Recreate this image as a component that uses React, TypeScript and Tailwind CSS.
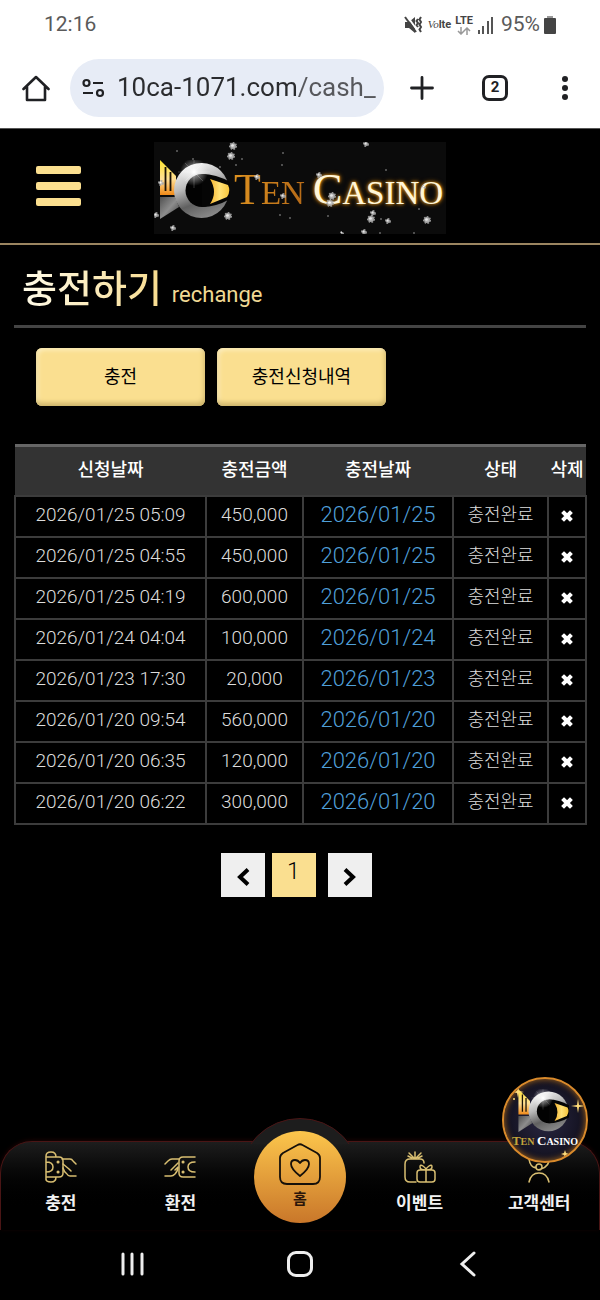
import { useState } from "react";
import type { ReactNode } from "react";

const columns = ["신청날짜", "충전금액", "충전날짜", "상태", "삭제"];

const initialRows = [
  { id: 1, requested: "2026/01/25 05:09", amount: "450,000", charged: "2026/01/25" },
  { id: 2, requested: "2026/01/25 04:55", amount: "450,000", charged: "2026/01/25" },
  { id: 3, requested: "2026/01/25 04:19", amount: "600,000", charged: "2026/01/25" },
  { id: 4, requested: "2026/01/24 04:04", amount: "100,000", charged: "2026/01/24" },
  { id: 5, requested: "2026/01/23 17:30", amount: "20,000", charged: "2026/01/23" },
  { id: 6, requested: "2026/01/20 09:54", amount: "560,000", charged: "2026/01/20" },
  { id: 7, requested: "2026/01/20 06:35", amount: "120,000", charged: "2026/01/20" },
  { id: 8, requested: "2026/01/20 06:22", amount: "300,000", charged: "2026/01/20" },
];

// x, y, radius
const sparkles = [
  [79, 4, 4], [77, 14, 4], [19, 86, 3], [2, 73, 3], [7, 41, 3],
  [74, 74, 4], [103, 35, 3], [129, 54, 3], [212, 2, 3], [165, 33, 3], [178, 54, 4],
  [176, 61, 4], [217, 77, 4], [219, 71, 3], [234, 79, 3], [273, 78, 4], [270, 45, 2],
  [188, 91, 2], [210, 90, 3], [23, 9, 1], [39, 17, 1], [88, 17, 1], [129, 11, 1],
  [128, 23, 1], [82, 23, 1], [66, 25, 1], [126, 73, 1], [136, 76, 1], [232, 28, 1],
  [227, 77, 1], [265, 67, 1], [174, 74, 1], [226, 91, 1], [260, 91, 1],
];

function StatusBar() {
  return (
    <div className="flex h-[47px] items-center justify-between px-11 pt-0.5 text-[21px] text-[#5a5a5a]">
      <span>12:16</span>
      <div className="flex items-center gap-1">
        <svg width="20" height="20" viewBox="0 0 20 20" fill="none">
          <path d="M1 7h4l6-5v16l-6-5H1z" fill="#444" />
          <path d="M3 1l10 14" stroke="#fff" strokeWidth="2" />
          <path d="M1 2l11 15" stroke="#444" strokeWidth="2" />
          <path d="M14 4l-1.500 2 1.500 2-1.500 2 1.500 2M17 2l-1.500 2.500L17 7l-1.500 2.500L17 12l-1.500 2.500L17 17" stroke="#444" strokeWidth="2" />
        </svg>
        <span className="flex items-baseline text-[11px] leading-4 text-[#444]">
          <i className="font-['Liberation_Serif',serif]">Vo</i>
          <b>lte</b>
        </span>
        <span className="flex flex-col items-center text-[11px] font-bold leading-3 text-[#444]">
          LTE
          <svg width="14" height="8" viewBox="0 0 14 8" fill="none" stroke="#999" strokeWidth="1.500">
            <path d="M4 0v6M1 4l3 3 3-3M10 8V2M7 4l3-3 3 3" />
          </svg>
        </span>
        <svg width="20" height="18" viewBox="0 0 20 18" fill="#555">
          <path d="M1 14h2v4H1zM5 10h2v8H5zM10 5h2v13h-2zM14 1h2v17h-2z" />
        </svg>
        <span>95%</span>
        <svg width="12" height="18" viewBox="0 0 12 18">
          <path d="M3 0h6v2H3z" fill="#999" />
          <rect y="2" width="12" height="16" rx="1" fill="#444" />
        </svg>
      </div>
    </div>
  );
}

function BrowserBar() {
  const [url, setUrl] = useState("10ca-1071.com/cash_");

  return (
    <div className="flex h-[82px] items-center border-b border-[#555] px-5 text-[#202124]">
      <button aria-label="Home page" className="flex h-8 w-8 items-center justify-center">
        <svg width="28" height="28" viewBox="0 0 28 28" fill="none" stroke="currentColor" strokeWidth="2.600" strokeLinejoin="round">
          <path d="M1.500 15L14 3l12.500 12M5 12.500V26h18V12.500" strokeLinecap="round" />
        </svg>
      </button>
      <label className="ml-[18px] flex h-[58px] min-w-0 flex-1 items-center gap-3 rounded-full bg-[#e7ecf6] pl-3">
        <svg width="23" height="20" viewBox="0 0 23 20" fill="none" stroke="currentColor" strokeWidth="2.200" className="shrink-0" aria-hidden="true">
          <circle cx="4.500" cy="5" r="3" />
          <path d="M11 5h10M1 15h10" />
          <circle cx="18" cy="15" r="3" />
        </svg>
        <input
          aria-label="Address"
          value={url}
          onChange={(e) => setUrl(e.target.value)}
          className="min-w-0 flex-1 bg-linear-to-r from-[#2b2c2f] from-67% to-[#57585c] to-67% bg-clip-text text-[26px] text-transparent outline-none"
        />
      </label>
      <button aria-label="New tab" className="ml-6 flex h-7 w-7 items-center justify-center">
        <svg width="24" height="24" viewBox="0 0 24 24" stroke="currentColor" strokeWidth="2.800" strokeLinecap="round">
          <path d="M1.500 12h21M12 1.500v21" />
        </svg>
      </button>
      <button
        aria-label="Tabs"
        className="ml-[46px] flex h-[26px] w-[26px] items-center justify-center rounded-[7px] border-[3px] border-[#202124] text-[15px] font-bold leading-none"
      >
        2
      </button>
      <button aria-label="Menu" className="ml-[42px] flex h-8 w-[30px] items-center justify-center">
        <svg width="8" height="26" viewBox="0 0 8 26" fill="currentColor">
          <circle cx="4" cy="4" r="3" />
          <circle cx="4" cy="13" r="3" />
          <circle cx="4" cy="22" r="3" />
        </svg>
      </button>
    </div>
  );
}

function Emblem({ id, className }: { id: string; className: string }) {
  return (
    <svg viewBox="0 0 72 60" className={className} aria-hidden="true">
      <defs>
        <linearGradient id={id + "-ring"} x1="0.200" y1="0" x2="0.600" y2="1">
          <stop offset="0" stopColor="#fff" />
          <stop offset="0.400" stopColor="#b9b9b9" />
          <stop offset="0.700" stopColor="#606060" />
          <stop offset="1" stopColor="#8a8a8a" />
        </linearGradient>
        <linearGradient id={id + "-gold"} x1="0" y1="0" x2="0" y2="1">
          <stop offset="0" stopColor="#ffe52e" />
          <stop offset="0.550" stopColor="#ffdf96" />
          <stop offset="1" stopColor="#f08a18" />
        </linearGradient>
        <linearGradient id={id + "-tail"} x1="0" y1="0" x2="1" y2="1">
          <stop offset="0" stopColor="#505050" />
          <stop offset="0.500" stopColor="#8d8d8d" />
          <stop offset="1" stopColor="#383838" />
        </linearGradient>
        <linearGradient id={id + "-eye"} x1="0" y1="0" x2="1" y2="0">
          <stop offset="0" stopColor="#f5b431" />
          <stop offset="0.500" stopColor="#ffe176" />
          <stop offset="1" stopColor="#f6c53c" />
        </linearGradient>
        <radialGradient id={id + "-flare"}>
          <stop offset="0" stopColor="#fff" />
          <stop offset="0.300" stopColor="#fff" stopOpacity="0.500" />
          <stop offset="1" stopColor="#fff" stopOpacity="0" />
        </radialGradient>
      </defs>
      <path d="M2 0l16 16v19H2z" fill={`url(#${id}-gold)`} />
      <path d="M7.500 7v24M12.500 12v19" stroke="#1a1206" strokeWidth="1.800" />
      <path d="M2 37h15l4 10L2 59z" fill={`url(#${id}-tail)`} />
      <circle cx="43.500" cy="30.500" r="27.500" fill={`url(#${id}-ring)`} />
      <circle cx="44" cy="30.500" r="16.500" fill="#020202" />
      <path d="M44 14q14 0 28 8v17q-14 8-28 8z" fill="#050505" />
      <path d="M52 19l18 6q3 6-1 12l-17 7q8-12 0-25z" fill={`url(#${id}-eye)`} />
      <circle cx="36" cy="12" r="14" fill={`url(#${id}-flare)`} />
      <path d="M20 12h32M36 0v28M27 3l18 18M45 3L27 21" stroke="#fff" strokeWidth="0.500" opacity="0.400" />
    </svg>
  );
}

function Header() {
  return (
    <header className="relative flex h-[116px] items-center justify-center border-b-2 border-[#9b8560]">
      <button aria-label="메뉴" className="absolute left-9 flex flex-col gap-2">
        <span className="h-2 w-[45px] rounded-xs bg-[#fbdf8f]" />
        <span className="h-2 w-[45px] rounded-xs bg-[#fbdf8f]" />
        <span className="h-2 w-[45px] rounded-xs bg-[#fbdf8f]" />
      </button>
      <a
        href="#"
        aria-label="Ten Casino"
        className="relative mt-1 flex h-[92px] w-[292px] items-center overflow-hidden bg-[#0b0b0b] pl-1 pt-1 font-['Liberation_Serif',serif] text-[33px] leading-none"
      >
        <Emblem id="logo" className="h-15 w-[72px] shrink-0" />
        <span className="ml-1 bg-linear-to-r from-[#dd9120] to-[#b56a18] bg-clip-text text-transparent">
          <span className="text-[44px]">T</span>EN
        </span>
        <span className="ml-2 text-[#fff6d8] [text-shadow:0_0_3px_#f0a020,0_0_5px_#c87808]">
          <span className="text-[44px]">C</span>ASINO
        </span>
        <svg viewBox="0 0 292 92" className="absolute inset-0 h-full w-full" aria-hidden="true">
          {sparkles.map(([x, y, r]) =>
            r > 1 ? (
              <g key={`${x}-${y}`} fill="#c4c4c4" stroke="#a8a8a8" opacity="0.900">
                <circle cx={x} cy={y} r={r - 1} strokeWidth="2" strokeDasharray="1.500 1.200" />
                <circle cx={x - 0.5} cy={y - 0.5} r={r / 3} fill="#fff" stroke="none" />
              </g>
            ) : (
              <circle key={`${x}-${y}`} cx={x} cy={y} r={r} fill="#666" />
            )
          )}
        </svg>
      </a>
    </header>
  );
}

function GoldButton({ children }: { children: ReactNode }) {
  return (
    <button className="h-[58px] w-[169px] rounded-md bg-[#fadf90] text-lg leading-6 text-black shadow-[inset_-1px_-3px_5px_#cbb269,inset_2px_2px_4px_#fdf0c4]">
      {children}
    </button>
  );
}

function HistoryTable() {
  const [rows, setRows] = useState(initialRows);

  const removeRow = (id: number) => setRows(rows.filter((row) => row.id !== id));

  return (
    <table className="w-full table-fixed border-collapse text-center">
      <colgroup>
        <col className="w-[191px]" />
        <col className="w-[97px]" />
        <col className="w-[150px]" />
        <col className="w-[95px]" />
        <col className="w-[38px]" />
      </colgroup>
      <thead>
        <tr className="h-[50px] border-b-2 border-t-[3px] border-b-[#222] border-t-[#666] bg-[#333] text-lg text-white">
          {columns.map((column) => (
            <th key={column} scope="col" className="whitespace-nowrap p-0 pb-0.5 font-medium">
              {column}
            </th>
          ))}
        </tr>
      </thead>
      <tbody className="text-[19px] font-light leading-6 text-[#ddd] [&_td]:h-[41px] [&_td]:border-2 [&_td]:border-[#3c3c3c] [&_td]:p-0 [&_td]:pb-0.5">
        {rows.map((row) => (
          <tr key={row.id}>
            <td>{row.requested}</td>
            <td>{row.amount}</td>
            <td className="text-[22px] text-[#4f9fd8]">{row.charged}</td>
            <td className="text-lg">충전완료</td>
            <td>
              <button aria-label={`${row.requested} 삭제`} onClick={() => removeRow(row.id)} className="block w-full pt-0.5">
                <svg width="14" height="14" viewBox="0 0 14 14" className="mx-auto" stroke="#fff" strokeWidth="4" strokeLinecap="square">
                  <path d="M4 4l6 6M10 4l-6 6" />
                </svg>
              </button>
            </td>
          </tr>
        ))}
      </tbody>
    </table>
  );
}

function Pagination() {
  return (
    <div className="mt-7 flex justify-center pr-2">
      <button aria-label="이전" className="flex h-11 w-11 items-center justify-center bg-[#efefef] pt-1">
        <svg width="14" height="18" viewBox="0 0 14 18" fill="none" stroke="#000" strokeWidth="4">
          <path d="M12 1.500L4 9l8 7.500" />
        </svg>
      </button>
      <button aria-current="page" className="ml-[7px] h-11 w-11 bg-[#fadf90] pb-1 text-[23px] font-light text-black">
        1
      </button>
      <button aria-label="다음" className="ml-3 flex h-11 w-11 items-center justify-center bg-[#efefef] pt-1">
        <svg width="14" height="18" viewBox="0 0 14 18" fill="none" stroke="#000" strokeWidth="4">
          <path d="M2 1.500L10 9l-8 7.500" />
        </svg>
      </button>
    </div>
  );
}

function NavItem({ label, children }: { label: string; children: ReactNode }) {
  return (
    <a href="#" className="flex flex-1 flex-col items-center gap-2 pt-[9px] text-[17px] font-bold leading-6 text-[#f2f2f2]">
      <svg width="32" height="32" viewBox="0 0 32 32" fill="none" stroke="#d9bf72" strokeWidth="1.500" strokeLinecap="round" strokeLinejoin="round" aria-hidden="true">
        {children}
      </svg>
      {label}
    </a>
  );
}

function BottomNav() {
  return (
    <nav className="relative flex h-[89px] rounded-t-[32px] border-x border-t border-[#4a1515] bg-linear-to-b from-[#1d1d1d] to-black to-80% shadow-[0_-1px_4px_#1c0404]">
      {/* raised part behind the home button */}
      <div className="absolute inset-x-0 -top-6 mx-auto h-[26px] w-[122px] overflow-hidden">
        <div className="h-[122px] w-[122px] rounded-full border border-[#4a1515] bg-[#1d1d1d]" />
      </div>

      <NavItem label="충전">
        <path d="M1 5v24M1 5q0-4 5-4t5 5M1 28q0 3 5 3t5-5M1 6h13q4 0 4 4v12q0 4-4 4H1M1 11q7 0 7 5t-7 5" />
        <path d="M17 8h8q2 0 3 2l3 3M18 13l6 5 2 2M18 17q1 4 4 6 1 2 3 2h6" />
        <path d="M13 11h.1M13 21h.1" strokeWidth="3" />
      </NavItem>
      <NavItem label="환전">
        <path d="M31 6H19q-4 0-4 4v12q0 4 4 4h12M31 11q-7 0-7 5t7 5" />
        <path d="M15 8H8Q6 8 4 10l-3 3M14 12l-7 7M1 25h6q2 0 4-2 3-3 3-7M14 16l-3 3" />
        <path d="M19 11h.1M19 21h.1" strokeWidth="3" />
      </NavItem>

      <div className="flex flex-1 justify-center">
        <a
          href="#"
          className="relative -top-[11px] flex h-[92px] w-[92px] flex-col items-center gap-0.5 rounded-full bg-linear-to-b from-[#fcc64c] to-[#c9772a] pt-3 text-[15px] font-bold leading-6 text-[#2b150a]"
        >
          <svg width="42" height="42" viewBox="0 0 42 42" fill="none" stroke="#16100a" strokeWidth="1.800" strokeLinejoin="round" aria-hidden="true">
            <path d="M18.500 2q2.500-1.500 5 0L38 10q3 2 3 5v19q0 7-7 7H8q-7 0-7-7V15q0-3 3-5z" />
            <path d="M21 33q-9-7-9-12 0-4 4-4 3 0 5 3 2-3 5-3 4 0 4 4 0 5-9 12z" />
          </svg>
          홈
        </a>
      </div>

      <NavItem label="이벤트">
        <path d="M12 31H6q-5 0-5-5V13q0-5 5-5h10q4 0 4 4M11 7V1M10 7L5 2M12 7l5-5M8 7L4 5M14 7l4-2" />
        <path d="M16 19h12q3 0 3 3v6q0 3-3 3H16q-3 0-3-3v-6q0-3 3-3zM22 19v12M22 19q-6 0-6-3t3-1 3 4M22 19q6 0 6-3t-3-1-3 4" />
      </NavItem>
      <NavItem label="고객센터">
        <path d="M6 31q2-9 10-9t10 9M6 8q1 8 7 9M26 7q1 8-8 11M12 16q2 4 6 2M13 16a3 3 0 1 0 6 0a3 3 0 1 0-6 0M6 9a10 8 0 0 1 20 0" />
      </NavItem>

      {/* floating shortcut badge */}
      <a
        href="#"
        aria-label="Ten Casino 바로가기"
        className="absolute -top-[65px] right-[11px] flex h-[86px] w-[86px] flex-col items-center overflow-hidden rounded-full border-2 border-[#d98a2b] bg-radial from-[#292742] to-[#0a0912] pt-2.5 font-['Liberation_Serif',serif] text-[10px] font-bold leading-4 text-white shadow-[inset_0_0_6px_#a8681c]"
      >
        <Emblem id="badge" className="mr-1 h-11 w-[52px] shrink-0" />
        <span className="whitespace-nowrap">
          <span className="text-[#c3a43b]"><span className="text-[13px]">T</span>EN</span>{" "}
          <span className="text-[13px]">C</span>ASINO
        </span>
        <svg viewBox="0 0 82 82" className="absolute inset-0 h-full w-full" fill="#ffdc7a" aria-hidden="true">
          <path d="M74 20l1 6 6 1-6 1-1 6-1-6-6-1 6-1zM14 7l1 5 5 1-5 1-1 5-1-5-5-1 5-1zM61 71l1 3 3 1-3 1-1 3-1-3-3-1 3-1z" />
          <circle cx="10" cy="20" r="1" />
        </svg>
      </a>
    </nav>
  );
}

function SystemNav() {
  return (
    <div className="flex h-[70px] items-center justify-between px-[118px] pb-0.5 text-[#eee]">
      <button aria-label="Recent apps">
        <svg width="28" height="28" viewBox="0 0 28 28" stroke="currentColor" strokeWidth="3" strokeLinecap="round">
          <path d="M5 4v20M14 4v20M24 4v20" />
        </svg>
      </button>
      <button aria-label="Home" className="h-[26px] w-[26px] rounded-[9px] border-[3px] border-[#eee]" />
      <button aria-label="Back">
        <svg width="28" height="28" viewBox="0 0 28 28" fill="none" stroke="currentColor" strokeWidth="3" strokeLinecap="round">
          <path d="M20 3L8 14l12 11" />
        </svg>
      </button>
    </div>
  );
}

export default function App() {
  return (
    <div className="flex min-h-screen flex-col bg-black font-[Roboto,'Noto_Sans_CJK_KR',sans-serif]">
      <div className="bg-white">
        <StatusBar />
        <BrowserBar />
      </div>
      <Header />

      <main className="flex-1 px-[14px] pb-16">
        <h1 className="flex h-[83px] items-baseline gap-2.5 border-b-[3px] border-[#444] pl-2 pt-4">
          <span className="bg-linear-to-r from-[#fffbe8] to-[#f8dc8e] bg-clip-text text-[38px] font-medium leading-14 text-transparent">
            충전하기
          </span>
          <small className="text-[22px] leading-8 text-[#f0d994]">rechange</small>
        </h1>

        <div className="mb-[38px] mt-5 flex gap-3 pl-[22px]">
          <GoldButton>충전</GoldButton>
          <GoldButton>충전신청내역</GoldButton>
        </div>

        <HistoryTable />
        <Pagination />
      </main>

      <BottomNav />
      <SystemNav />
    </div>
  );
}
